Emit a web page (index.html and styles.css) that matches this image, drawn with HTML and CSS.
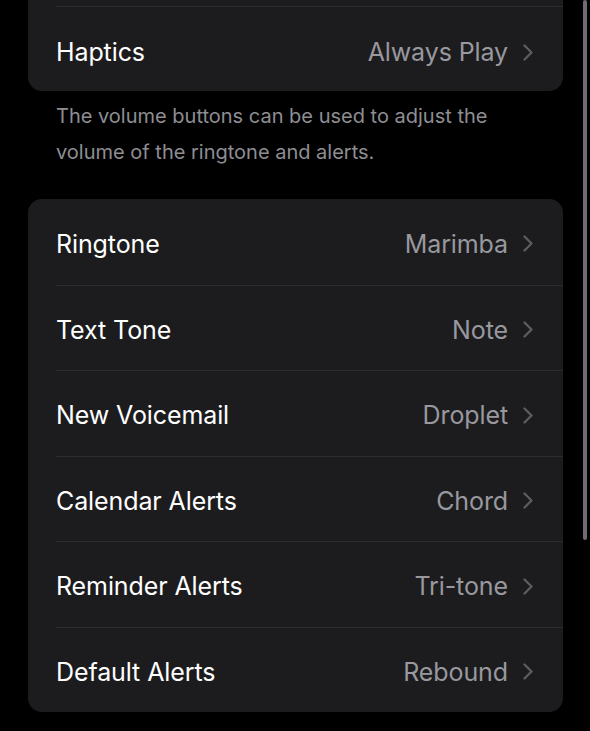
FILE: index.html
```html
<!DOCTYPE html>
<html lang="en">

<head>
    <meta charset="UTF-8">
    <meta name="viewport" content="width=device-width, initial-scale=1.0">
    <title>Sounds &amp; Haptics</title>
    <link rel="stylesheet" href="styles.css">
</head>

<body>
    <div id="page">
        <div class="group group-top">
            <!-- row above is scrolled out of view -->
            <div class="row"></div>
            <div class="row">
                <span class="label">Haptics</span>
                <span class="value">Always Play</span>
                <svg class="chev" viewBox="0 0 10 17"><path d="M1.5 1.5 L8.5 8.5 L1.5 15.5" /></svg>
            </div>
        </div>
        <p class="footer">The volume buttons can be used to adjust the<br>volume of the ringtone and alerts.</p>
        <div class="group">
            <div class="row">
                <span class="label">Ringtone</span>
                <span class="value">Marimba</span>
                <svg class="chev" viewBox="0 0 10 17"><path d="M1.5 1.5 L8.5 8.5 L1.5 15.5" /></svg>
            </div>
            <div class="row">
                <span class="label">Text Tone</span>
                <span class="value">Note</span>
                <svg class="chev" viewBox="0 0 10 17"><path d="M1.5 1.5 L8.5 8.5 L1.5 15.5" /></svg>
            </div>
            <div class="row">
                <span class="label">New Voicemail</span>
                <span class="value">Droplet</span>
                <svg class="chev" viewBox="0 0 10 17"><path d="M1.5 1.5 L8.5 8.5 L1.5 15.5" /></svg>
            </div>
            <div class="row">
                <span class="label">Calendar Alerts</span>
                <span class="value">Chord</span>
                <svg class="chev" viewBox="0 0 10 17"><path d="M1.5 1.5 L8.5 8.5 L1.5 15.5" /></svg>
            </div>
            <div class="row">
                <span class="label">Reminder Alerts</span>
                <span class="value">Tri-tone</span>
                <svg class="chev" viewBox="0 0 10 17"><path d="M1.5 1.5 L8.5 8.5 L1.5 15.5" /></svg>
            </div>
            <div class="row">
                <span class="label">Default Alerts</span>
                <span class="value">Rebound</span>
                <svg class="chev" viewBox="0 0 10 17"><path d="M1.5 1.5 L8.5 8.5 L1.5 15.5" /></svg>
            </div>
        </div>
    </div>
    <div id="scrollbar"></div>
</body>

</html>
```

FILE: styles.css
```css
* {
    margin: 0;
    padding: 0;
    box-sizing: border-box;
}

body {
    background-color: #000;
    font-family: Inter, "Noto Sans", sans-serif;
    height: 731px;
    overflow: hidden;
}

#page {
    padding: 0 27px 0 28px;
}

.group {
    background-color: #1c1c1e;
    border-radius: 14px;
    overflow: hidden;
}

.group-top {
    margin-top: -80px;
    border-top-left-radius: 0;
    border-top-right-radius: 0;
}

.row {
    display: flex;
    align-items: center;
    height: 85.5px;
    margin-left: 28px;
    padding-top: 4px;
    padding-right: 30px;
    border-top: 1px solid #2c2c2f;
}

.row:first-child {
    border-top: none;
}

.group-top .row:last-child {
    padding-top: 7px;
}

.label {
    flex: 1;
    color: #fff;
    font-size: 25px;
    letter-spacing: -0.1px;
}

.value {
    color: #98989e;
    font-size: 25px;
    letter-spacing: -0.1px;
    margin-right: 15px;
}

.chev {
    width: 10px;
    height: 17px;
}

.chev path {
    fill: none;
    stroke: #5b5b60;
    stroke-width: 2.4;
    stroke-linecap: round;
    stroke-linejoin: round;
}

.footer {
    color: #8e8e93;
    font-size: 20px;
    line-height: 36px;
    padding: 7px 28px 29px 28px;
}

#scrollbar {
    position: absolute;
    top: 0;
    right: 3px;
    width: 4px;
    height: 540px;
    border-radius: 2px;
    background-color: #6e6e70;
}
```
